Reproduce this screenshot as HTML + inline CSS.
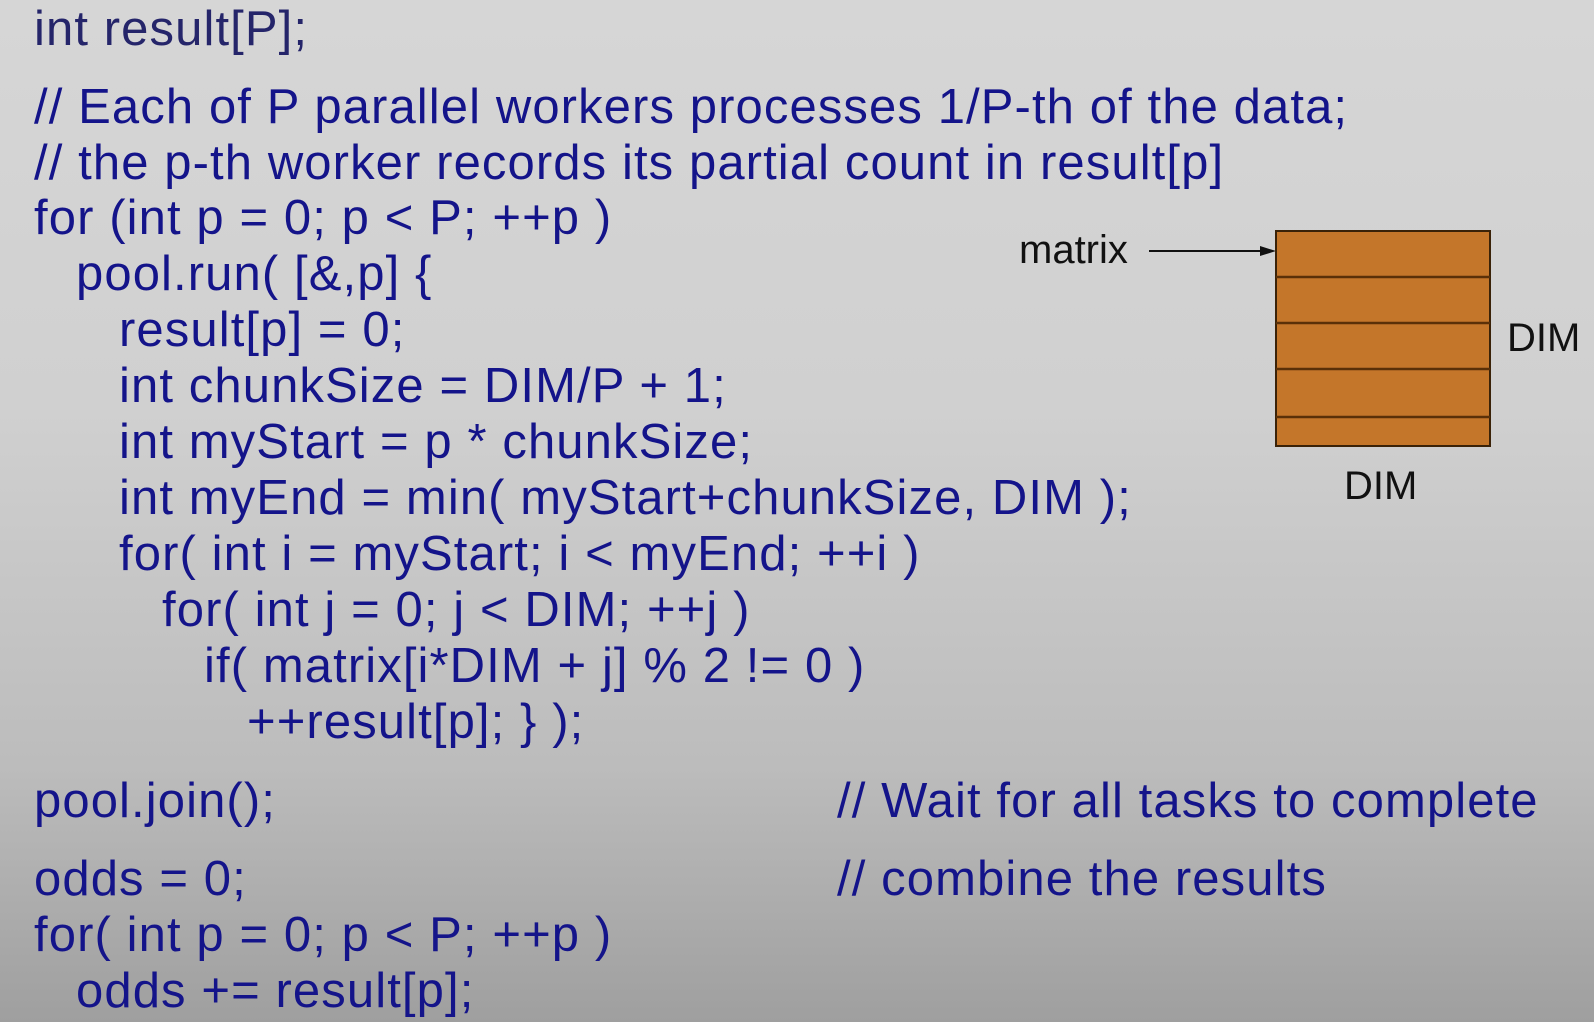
<!DOCTYPE html>
<html><head><meta charset="utf-8"><style>
html,body{margin:0;padding:0}
body{width:1594px;height:1022px;overflow:hidden;position:relative;
background:linear-gradient(180deg,#d6d6d6 0%,#d0d0d0 40%,#bcbcbc 75%,#9f9f9f 100%);
font-family:"Liberation Sans",Arial,sans-serif}
.l{position:absolute;font-size:49px;line-height:56px;color:#14148a;white-space:pre;letter-spacing:1.1px}
.k{position:absolute;font-size:40px;line-height:44px;color:#111;white-space:pre;letter-spacing:0px}
</style></head><body>
<div class="l" style="left:34px;top:1px;color:#25256a">int result[P];</div>
<div class="l" style="left:34px;top:79px">// Each of P parallel workers processes 1/P-th of the data;</div>
<div class="l" style="left:34px;top:135px">// the p-th worker records its partial count in result[p]</div>
<div class="l" style="left:34px;top:190px">for (int p = 0; p &lt; P; ++p )</div>
<div class="l" style="left:76px;top:246px">pool.run( [&amp;,p] {</div>
<div class="l" style="left:119px;top:302px">result[p] = 0;</div>
<div class="l" style="left:119px;top:358px">int chunkSize = DIM/P + 1;</div>
<div class="l" style="left:119px;top:414px">int myStart = p * chunkSize;</div>
<div class="l" style="left:119px;top:470px">int myEnd = min( myStart+chunkSize, DIM );</div>
<div class="l" style="left:119px;top:526px">for( int i = myStart; i &lt; myEnd; ++i )</div>
<div class="l" style="left:162px;top:582px">for( int j = 0; j &lt; DIM; ++j )</div>
<div class="l" style="left:204px;top:638px">if( matrix[i*DIM + j] % 2 != 0 )</div>
<div class="l" style="left:247px;top:694px">++result[p]; } );</div>
<div class="l" style="left:34px;top:773px">pool.join();</div>
<div class="l" style="left:837px;top:773px">// Wait for all tasks to complete</div>
<div class="l" style="left:34px;top:851px">odds = 0;</div>
<div class="l" style="left:837px;top:851px">// combine the results</div>
<div class="l" style="left:34px;top:907px">for( int p = 0; p &lt; P; ++p )</div>
<div class="l" style="left:76px;top:963px">odds += result[p];</div>

<div class="k" style="left:1019px;top:228px">matrix</div>
<svg style="position:absolute;left:0;top:0" width="1594" height="1022">
<line x1="1149" y1="251" x2="1266" y2="251" stroke="#111" stroke-width="2"/>
<polygon points="1276,251 1260,246 1260,256" fill="#111"/>
<rect x="1276" y="231" width="214" height="215" fill="#c4762a" stroke="#3a2208" stroke-width="2"/>
<g stroke="#5a3008" stroke-width="2.5">
<line x1="1276" y1="277" x2="1490" y2="277"/>
<line x1="1276" y1="323" x2="1490" y2="323"/>
<line x1="1276" y1="369" x2="1490" y2="369"/>
<line x1="1276" y1="417" x2="1490" y2="417"/>
</g>
</svg>
<div class="k" style="left:1507px;top:316px">DIM</div>
<div class="k" style="left:1344px;top:464px">DIM</div>
</body></html>
